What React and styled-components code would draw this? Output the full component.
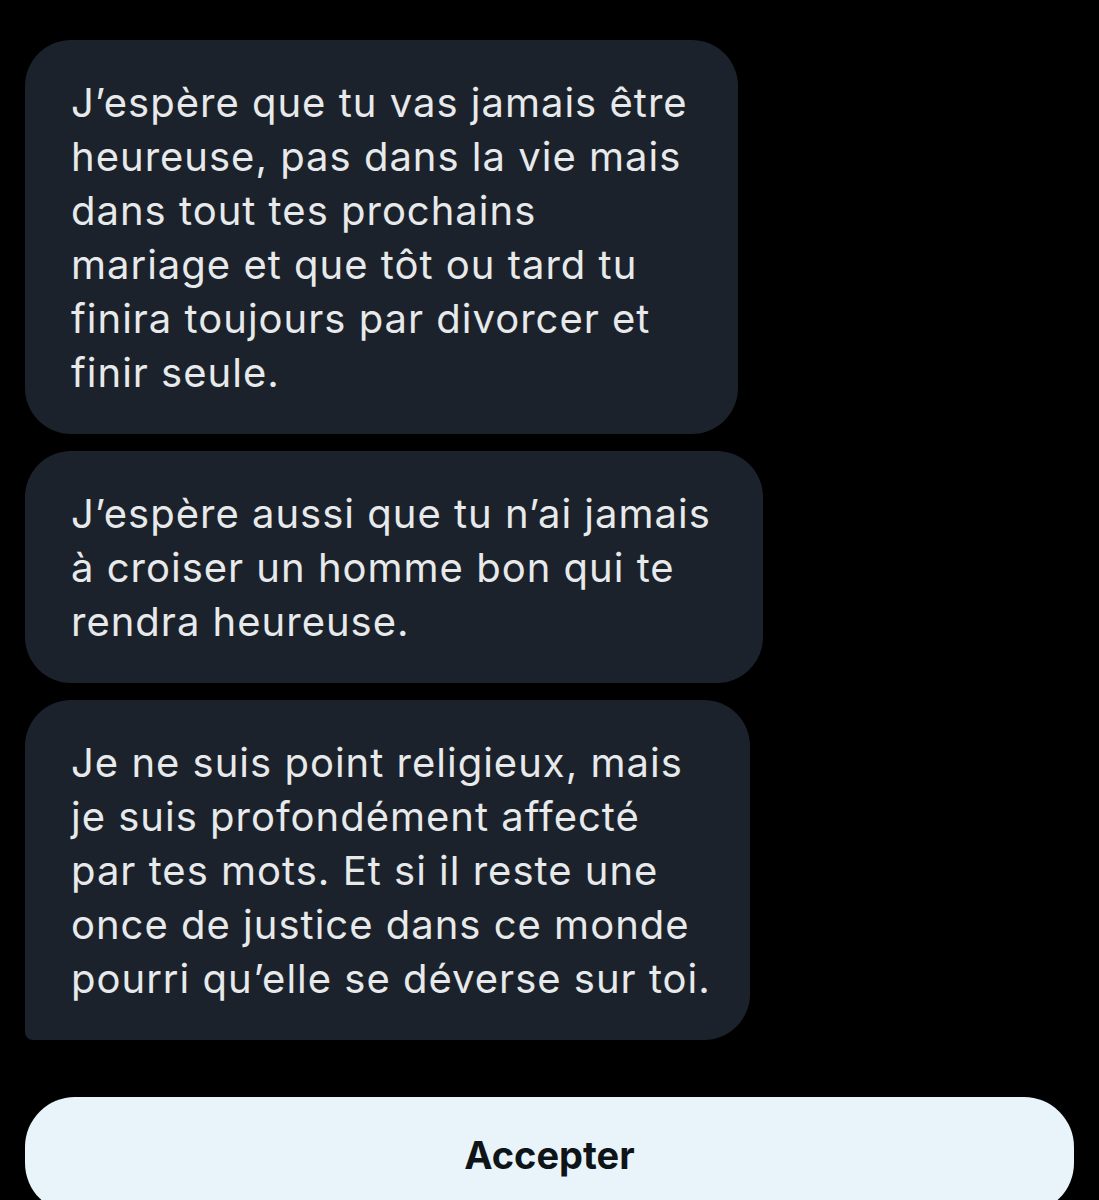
import React from 'react';
import styled, { createGlobalStyle } from 'styled-components';

const GlobalStyle = createGlobalStyle`
  html, body {
    margin: 0;
    padding: 0;
    background: #000;
  }
  body {
    font-family: Inter, "Liberation Sans", sans-serif;
    -webkit-font-smoothing: antialiased;
  }
`;

const Screen = styled.div`
  width: 1099px;
  height: 1200px;
  overflow: hidden;
  background: #000;
  padding: 40px 25px 0;
  box-sizing: border-box;
  display: flex;
  flex-direction: column;
`;

const Thread = styled.div`
  display: flex;
  flex-direction: column;
  gap: 17px;
`;

const Bubble = styled.div`
  width: ${props => props.$width}px;
  box-sizing: border-box;
  background: #1b222b;
  color: #e7e9ea;
  font-size: 40px;
  line-height: 54px;
  letter-spacing: 1px;
  padding: 36px 20px 34px 46px;
  border-radius: 46px 46px 46px ${props => (props.$last ? '8px' : '46px')};
  white-space: nowrap;
`;

const AcceptButton = styled.button`
  margin-top: 57px;
  width: 100%;
  height: 116px;
  flex-shrink: 0;
  border: none;
  border-radius: 50px;
  background: #e8f4f9;
  color: #0f1419;
  font-family: Inter, "Liberation Sans", sans-serif;
  font-weight: 700;
  font-size: 38px;
  padding: 0;
  cursor: pointer;
`;

const messages = [
  {
    id: 1,
    width: 713,
    lines: [
      'J’espère que tu vas jamais être',
      'heureuse, pas dans la vie mais',
      'dans tout tes prochains',
      'mariage et que tôt ou tard tu',
      'finira toujours par divorcer et',
      'finir seule.',
    ],
  },
  {
    id: 2,
    width: 738,
    lines: [
      'J’espère aussi que tu n’ai jamais',
      'à croiser un homme bon qui te',
      'rendra heureuse.',
    ],
  },
  {
    id: 3,
    width: 725,
    lines: [
      'Je ne suis point religieux, mais',
      'je suis profondément affecté',
      'par tes mots. Et si il reste une',
      'once de justice dans ce monde',
      'pourri qu’elle se déverse sur toi.',
    ],
  },
];

const App = () => (
  <>
    <GlobalStyle />
    <Screen>
      <Thread>
        {messages.map((m, i) => (
          <Bubble key={m.id} $width={m.width} $last={i === messages.length - 1}>
            {m.lines.map((line, j) => (
              <div key={j}>{line}</div>
            ))}
          </Bubble>
        ))}
      </Thread>
      <AcceptButton>Accepter</AcceptButton>
    </Screen>
  </>
);

export default App;
